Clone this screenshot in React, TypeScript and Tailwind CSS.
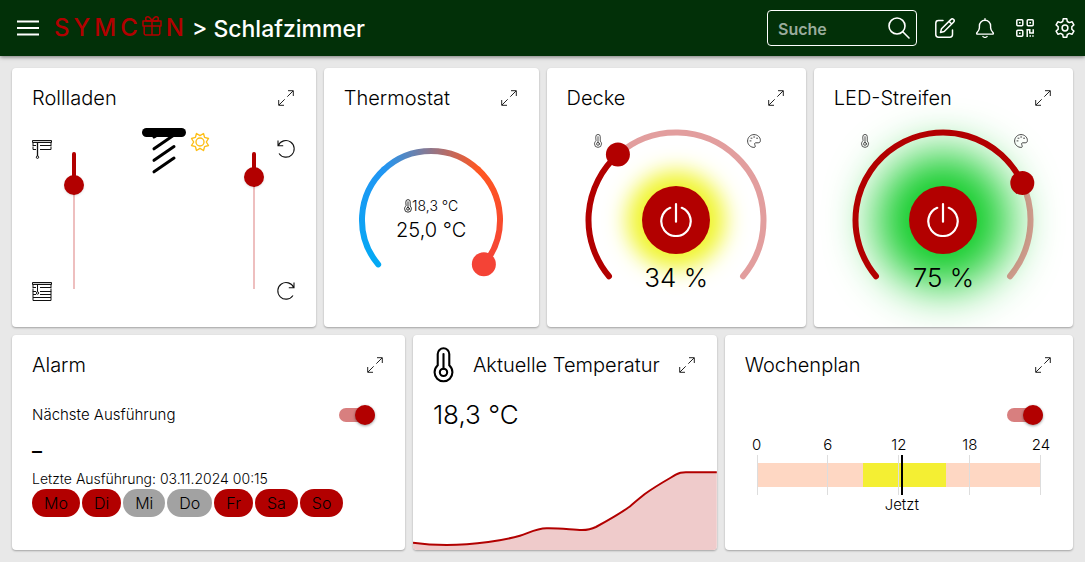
import { useId, useState, type ReactNode } from 'react';

interface CardProps {
    title: string;
    className: string;
    icon?: ReactNode;
    children: ReactNode;
}

interface Point {
    x: number;
    y: number;
}

const DAYS = ['Mo', 'Di', 'Mi', 'Do', 'Fr', 'Sa', 'So'];
const HOURS = [0, 6, 12, 18, 24];
const NOW = 12.25;

// Dials start at -130° and end at 130°, measured from the top
const DIAL_RANGE = 130;

const polar = (radius: number, angle: number): Point => {
    const rad = (angle * Math.PI) / 180;
    return { x: radius * Math.sin(rad), y: -radius * Math.cos(rad) };
};

const arc = (radius: number, from: number, to: number) => {
    const a = polar(radius, from);
    const b = polar(radius, to);
    return `M${a.x} ${a.y}A${radius} ${radius} 0 ${to - from > 180 ? 1 : 0} 1 ${b.x} ${b.y}`;
};

function ExpandIcon() {
    return (
        <svg viewBox="0 0 16 16" className="size-4" fill="none" stroke="#222" strokeWidth="1">
            <path d="M10 .7h5.3V6M15.1.9 9.3 6.7M.7 10v5.3H6M.9 15.1l5.8-5.8" />
        </svg>
    );
}

function ThermometerIcon({ className, strokeWidth = 1 }: { className: string; strokeWidth?: number }) {
    return (
        <svg viewBox="0 0 20 34" className={className} fill="none" stroke="currentColor" strokeWidth={strokeWidth} strokeLinecap="round">
            <path d="M4.5 6.5a5.5 5.5 0 0 1 11 0v10.7c1.9 1.8 3 4 3 6.8a8.5 8.5 0 0 1-17 0c0-2.8 1.1-5 3-6.8z" />
            <circle cx="10" cy="24" r="3.5" />
            <path d="M10 6.5v14" />
        </svg>
    );
}

function PaletteIcon() {
    return (
        <svg viewBox="0 0 14 14" className="size-3.5" fill="none" stroke="#333" strokeWidth="0.9">
            <path d="M7.5 13.4C3.8 13.6.6 10.8.6 7 .6 3.5 3.4.6 7 .6s6.4 2.6 6.4 5.9c0 1.5-.8 2.3-2.2 2.3H8.8c-1 0-1.5.8-1.1 1.7l.4 1.2c.3.9.1 1.6-.6 1.7z" />
            <path d="M3 6.9h1M4 4.2h1M6.7 3h1M9.6 4.2h1" strokeLinecap="round" />
        </svg>
    );
}

function BlindIcon({ closed }: { closed?: boolean }) {
    return (
        <svg viewBox="0 0 20 20" className="size-5" fill="none" stroke="#111" strokeWidth="1">
            <path d="M.5 1.5h19v2H.5z" fill="#ccc" />
            <path d="M1 3.500v3.500M19 3.500v3.500M1 6.500h3M8 6.500h11M1 10.500h3M8 10.500h11M19 7.500v3M1 7.500v3" />
            {closed ? (
                <>
                    <path d="M5.500 4v7M1 10v9.500M19 10v9.500M1 13.500h3M8 13.500h11M1 16.500h18M1 19.500h18" />
                    <circle cx="5.500" cy="12" r="1.200" fill="#fff" />
                </>
            ) : (
                <>
                    <path d="M5.500 4v13" strokeWidth="1.3" />
                    <circle cx="5.500" cy="18.200" r="1.200" />
                </>
            )}
        </svg>
    );
}

function RotateIcon({ clockwise }: { clockwise?: boolean }) {
    return (
        <svg
            viewBox="0 0 20 20"
            className={clockwise ? 'size-5 -scale-x-100' : 'size-5'}
            fill="none"
            stroke="#111"
            strokeWidth="1.1"
        >
            <path d="M2 1.500v5.200h5.200M2.300 6.500a8.300 8.300 0 1 1 .7 8" />
        </svg>
    );
}

function Card({ title, className, icon, children }: CardProps) {
    return (
        <section className={`flex flex-col overflow-hidden rounded bg-white pt-4 shadow-[0_1px_2px_rgba(0,0,0,0.3)] ${className}`}>
            <div className="flex h-7 items-center px-5">
                {icon && <span className="flex w-10 shrink-0">{icon}</span>}
                <h2 className="flex-1 text-[20px] font-light whitespace-nowrap">{title}</h2>
                <button aria-label={`${title} vergrößern`} className="flex size-5 items-center justify-center">
                    <ExpandIcon />
                </button>
            </div>
            {children}
        </section>
    );
}

function VerticalSlider({ label, initial }: { label: string; initial: number }) {
    const [value, setValue] = useState(initial);

    return (
        <div className="relative flex h-[137px] w-5 justify-center">
            <div className="h-full w-0.5 bg-[#eebfbf]"></div>
            <div className="absolute top-0 w-1 rounded-t-sm bg-[#b20000]" style={{ height: `${value}%` }}></div>
            <div
                className="absolute size-5 -translate-y-1/2 rounded-full bg-[#b20000] shadow-sm"
                style={{ top: `${value}%` }}
            ></div>
            <input
                type="range"
                aria-label={label}
                value={value}
                onChange={(e) => setValue(Number(e.target.value))}
                className="absolute inset-0 h-full w-full cursor-pointer opacity-0 [writing-mode:vertical-lr]"
            />
        </div>
    );
}

function Switch({ label }: { label: string }) {
    const [on, setOn] = useState(true);

    return (
        <label className="relative flex h-5 w-9 cursor-pointer items-center">
            <input
                type="checkbox"
                role="switch"
                aria-label={label}
                checked={on}
                onChange={() => setOn(!on)}
                className="peer h-3.5 w-full appearance-none rounded-full bg-gray-400 checked:bg-[#d87f7f]"
            />
            <span className="pointer-events-none absolute left-0 size-5 rounded-full bg-gray-100 shadow-[0_1px_3px_rgba(0,0,0,0.4)] peer-checked:left-4 peer-checked:bg-[#b20000]"></span>
        </label>
    );
}

function LightDial({ name, initial, glow }: { name: string; initial: number; glow: string }) {
    const [value, setValue] = useState(initial);
    const angle = -DIAL_RANGE + (value / 100) * DIAL_RANGE * 2;
    const thumb = polar(87.5, angle);

    return (
        <div className="mx-auto mt-3.5 grid size-[188px] place-items-center *:col-start-1 *:row-start-1">
            <button aria-label={`${name} schalten`} className={`flex size-[68px] items-center justify-center rounded-full bg-[#b20000] ${glow}`}>
                <svg viewBox="0 0 34 34" className="size-[34px]" fill="none" stroke="#fff" strokeWidth="2.2" strokeLinecap="round">
                    <path d="M17 1.200v17.500M11.200 4.800a14.700 14.700 0 1 0 11.600 0" />
                </svg>
            </button>
            <svg viewBox="-94 -94 188 188" className="pointer-events-none z-10 size-full" fill="none" strokeWidth="6" strokeLinecap="round">
                <path d={arc(87.5, angle, DIAL_RANGE)} stroke="#b20000" strokeOpacity="0.38" />
                <path d={arc(87.5, -DIAL_RANGE, angle)} stroke="#b20000" />
                <circle cx={thumb.x} cy={thumb.y} r="12" fill="#b20000" />
            </svg>
            <div className="z-10 flex w-full items-center justify-between self-start px-2 pt-2">
                <button aria-label="Farbtemperatur" className="flex w-4 justify-center">
                    <ThermometerIcon className="h-3.5 w-2.5 text-[#333]" strokeWidth={2} />
                </button>
                <button aria-label="Farbe" className="flex w-4 justify-center">
                    <PaletteIcon />
                </button>
            </div>
            <output className="z-10 mb-[18px] self-end text-[26px] leading-9 font-light">{value} %</output>
            <input
                type="range"
                aria-label={`${name} Helligkeit`}
                value={value}
                onChange={(e) => setValue(Number(e.target.value))}
                className="sr-only"
            />
        </div>
    );
}

function ThermostatDial() {
    const id = useId();
    const end = polar(69, DIAL_RANGE);

    return (
        <div className="mx-auto mt-8 grid size-[152px] place-items-center *:col-start-1 *:row-start-1">
            <svg viewBox="-76 -76 152 152" className="size-full overflow-visible" fill="none" strokeWidth="6">
                <defs>
                    <linearGradient id={`${id}l`} gradientUnits="userSpaceOnUse" x1="-53" y1="44" x2="-47" y2="-50">
                        <stop stopColor="#03a9f4" />
                        <stop offset="1" stopColor="#2196f3" />
                    </linearGradient>
                    <linearGradient id={`${id}t`} gradientUnits="userSpaceOnUse" x1="-47" y1="0" x2="47" y2="0">
                        <stop stopColor="#2196f3" />
                        <stop offset="1" stopColor="#ff5722" />
                    </linearGradient>
                    <linearGradient id={`${id}r`} gradientUnits="userSpaceOnUse" x1="47" y1="-50" x2="53" y2="44">
                        <stop stopColor="#ff5722" />
                        <stop offset="1" stopColor="#f44336" />
                    </linearGradient>
                </defs>
                <path d={arc(69, -DIAL_RANGE, -43)} stroke={`url(#${id}l)`} strokeLinecap="round" />
                <path d={arc(69, 43, DIAL_RANGE)} stroke={`url(#${id}r)`} strokeLinecap="round" />
                <path d={arc(69, -44, 44)} stroke={`url(#${id}t)`} />
                <circle cx={end.x} cy={end.y} r="12" fill="#f44336" />
            </svg>
            <div className="flex flex-col items-center pb-1 font-light">
                <span className="flex h-6 items-center text-sm">
                    <ThermometerIcon className="h-3.5 w-2" strokeWidth={2} />
                    18,3 °C
                </span>
                <span className="text-[20px] leading-6">25,0 °C</span>
            </div>
        </div>
    );
}

function Shutter() {
    return (
        <div className="flex justify-between px-5 pt-4">
            <div className="flex gap-3">
                <div className="mt-[11px] flex h-[162px] flex-col justify-between">
                    <button aria-label="Öffnen">
                        <BlindIcon />
                    </button>
                    <button aria-label="Schließen">
                        <BlindIcon closed />
                    </button>
                </div>
                <div className="pt-6">
                    <VerticalSlider label="Position" initial={24} />
                </div>
            </div>
            <div className="flex gap-1 pl-6">
                <svg viewBox="0 0 44 46" className="h-[46px] w-11" stroke="#000" strokeLinecap="round">
                    <path d="M4.500 4.500h35" strokeWidth="9" />
                    <path d="M12 9l1.500-.8M12 20.800 32 7M12 32.300l20-13.800M12 43.800 32 30" strokeWidth="3" />
                </svg>
                <svg viewBox="-10 -10 20 20" className="mt-1 size-5" fill="none" stroke="#fdbf18" strokeWidth="1.4" strokeLinejoin="round">
                    <path d="M0-6.300 3.500-8.500 4.600-4.600 8.500-3.500 6.300 0 8.500 3.500 4.600 4.600 3.500 8.500 0 6.300-3.500 8.500-4.600 4.600-8.500 3.500-6.300 0-8.500-3.500-4.600-4.600-3.500-8.500z" />
                    <circle r="4" />
                </svg>
            </div>
            <div className="flex gap-3">
                <div className="pt-6">
                    <VerticalSlider label="Lamellen" initial={18} />
                </div>
                <div className="mt-[11px] flex h-[162px] flex-col justify-between">
                    <button aria-label="Lamellen auf">
                        <RotateIcon />
                    </button>
                    <button aria-label="Lamellen zu">
                        <RotateIcon clockwise />
                    </button>
                </div>
            </div>
        </div>
    );
}

function Alarm() {
    const [active, setActive] = useState(['Mo', 'Di', 'Fr', 'Sa', 'So']);

    const toggle = (day: string) => {
        setActive(active.includes(day) ? active.filter((d) => d !== day) : [...active, day]);
    };

    return (
        <div className="flex flex-col px-5 pt-6 text-[15px] font-light">
            <div className="flex h-6 items-center justify-between pr-2.5">
                <span>Nächste Ausführung</span>
                <Switch label="Alarm aktiv" />
            </div>
            <div className="pt-2 text-[20px] leading-8 font-medium">–</div>
            <div className="text-sm leading-6">Letzte Ausführung: 03.11.2024 00:15</div>
            <div className="-mt-0.5 flex gap-0.5 text-base">
                {DAYS.map((day) => (
                    <button
                        key={day}
                        aria-pressed={active.includes(day)}
                        onClick={() => toggle(day)}
                        className={`h-7 rounded-full px-3 leading-7 ${active.includes(day) ? 'bg-[#b20000]' : 'bg-[#a2a2a2]'}`}
                    >
                        {day}
                    </button>
                ))}
            </div>
        </div>
    );
}

function Temperature() {
    const line =
        'M0 72.7C11 74.3 22 75 33.7 75 62 75 92 70 107 65.7 116 63 123 58.5 133.7 58.3 148 58 160 60 169 60 176 60 178 59.5 183 57 195 50.5 208 43 217 36.5 222 32 227 28 232 24 243 16 254 10 263 4.7 267 2.4 268 2.3 273 2.3H304';

    return (
        <>
            <div className="px-5 pt-4 text-[26px] leading-10 font-light">18,3 °C</div>
            <svg viewBox="0 0 304 80" preserveAspectRatio="none" className="mt-auto h-20 w-full" fill="none">
                <path d={`${line}V80H0z`} fill="#efcbcb" />
                <path d={line} stroke="#b20000" strokeWidth="2" />
            </svg>
        </>
    );
}

function WeekPlan() {
    return (
        <div className="px-5 pt-6 text-[15px] font-light">
            <div className="flex h-6 items-center justify-end pr-2.5">
                <Switch label="Wochenplan aktiv" />
            </div>
            <div className="mx-3 pt-2">
                <div className="flex justify-between leading-5">
                    {HOURS.map((hour) => (
                        <span key={hour} className="flex w-0 justify-center">
                            {hour}
                        </span>
                    ))}
                </div>
                <div className="relative flex h-10 items-center">
                    <div className="grid h-6 w-full grid-cols-24">
                        <div className="col-span-9 bg-[#fed7c3]"></div>
                        <div className="col-span-7 bg-[#f4ef33]"></div>
                        <div className="col-span-8 bg-[#fed7c3]"></div>
                    </div>
                    <div className="absolute inset-0 flex justify-between">
                        {HOURS.map((hour) => (
                            <div key={hour} className="w-px bg-[#dddddd]"></div>
                        ))}
                    </div>
                    <div
                        className="absolute inset-y-0 w-0.5 -translate-x-1/2 bg-black"
                        style={{ left: `${(NOW / 24) * 100}%` }}
                    ></div>
                </div>
                <div className="flex leading-5">
                    <span style={{ width: `${(NOW / 24) * 100}%` }}></span>
                    <span className="flex w-0 justify-center">Jetzt</span>
                </div>
            </div>
        </div>
    );
}

function Header() {
    return (
        <header className="relative flex h-14 items-center bg-[#023008] pr-2 pl-4 text-white shadow-[0_1px_4px_rgba(0,0,0,0.5)]">
            <button aria-label="Menü" className="flex">
                <svg viewBox="0 0 24 24" className="size-6" stroke="currentColor" strokeWidth="2">
                    <path d="M1 5.500h22M1 12h22M1 18.500h22" />
                </svg>
            </button>
            <div className="ml-3.5 flex items-center gap-1 text-[24px] leading-8 font-medium text-[#b20000]">
                <span>S</span>
                <span>Y</span>
                <span>M</span>
                <span>C</span>
                <svg viewBox="0 0 20 20" className="mb-1 size-5" fill="none" stroke="currentColor" strokeWidth="1.5" strokeLinejoin="round">
                    <path d="M1 5h18v5H1zM2.200 10v7.500c0 .9.500 1.400 1.400 1.400h12.800c.9 0 1.400-.5 1.400-1.400V10M10 5v14" />
                    <path d="M10 5C8.500 2 7.500.8 5.800.8a2.100 2.100 0 0 0 0 4.200zM10 5c1.500-3 2.500-4.200 4.200-4.200a2.100 2.100 0 0 1 0 4.200z" />
                </svg>
                <span>N</span>
            </div>
            <h1 className="mt-0.5 ml-2 text-[23px] font-medium whitespace-nowrap">&gt; Schlafzimmer</h1>
            <label className="ml-auto flex h-9 w-[150px] items-center rounded border border-white pr-1.5 pl-2.5">
                <input
                    type="search"
                    placeholder="Suche"
                    aria-label="Suche"
                    className="min-w-0 flex-1 bg-transparent pt-0.5 text-base font-semibold outline-none placeholder:text-[#9aac9c]"
                />
                <svg viewBox="0 0 22 22" className="size-[22px] shrink-0" fill="none" stroke="currentColor" strokeWidth="1.6" strokeLinecap="round">
                    <circle cx="9" cy="9" r="8" />
                    <path d="m14.800 14.800 6.200 6.200" />
                </svg>
            </label>
            <nav className="ml-4 flex gap-4 *:flex *:size-6 *:items-center *:justify-center">
                <button aria-label="Bearbeiten">
                    <svg viewBox="0 0 20 20" className="size-5" fill="none" stroke="currentColor" strokeWidth="1.5" strokeLinecap="round" strokeLinejoin="round">
                        <path d="M8 2.500H3.500c-1.700 0-2.700 1-2.700 2.700v11.300c0 1.700 1 2.700 2.700 2.700h11.300c1.700 0 2.700-1 2.700-2.700V12" />
                        <path d="M6.500 10.800 16 1.400a1.700 1.700 0 0 1 2.500 0l.2.200a1.700 1.700 0 0 1 0 2.400l-9.500 9.500-3.700.9zM14 3.400 16.700 6" />
                    </svg>
                </button>
                <button aria-label="Meldungen">
                    <svg viewBox="0 0 20 20" className="size-5" fill="none" stroke="currentColor" strokeWidth="1.4" strokeLinecap="round" strokeLinejoin="round">
                        <path d="M10 2.300c-3.400 0-5.600 2.500-5.600 5.700v1.700c0 2-1 3.500-2.500 5.100-.5.600-.2 1.300.5 1.300h15.200c.7 0 1-.7.5-1.300-1.500-1.600-2.500-3.100-2.500-5.100V8c0-3.200-2.200-5.700-5.600-5.700zM10 .7v1.600M8 18.600c.9 1 3.100 1 4 0" />
                    </svg>
                </button>
                <button aria-label="QR-Code">
                    <svg viewBox="0 0 18 18" className="size-[18px]" fill="none" stroke="currentColor" strokeWidth="1.5">
                        <rect x=".8" y=".8" width="6" height="6" rx="1" />
                        <rect x="11.2" y=".8" width="6" height="6" rx="1" />
                        <rect x=".8" y="11.2" width="6" height="6" rx="1" />
                        <path d="M3 3.800h1.600M13.400 3.800H15M3 14.200h1.600M11.200 18v-7.200h2.600v3.200h3.400v-3.700M13.500 17h1.500M16.200 17h1.500" />
                    </svg>
                </button>
                <button aria-label="Einstellungen">
                    <svg viewBox="0 0 20 20" className="size-5" fill="none" stroke="currentColor" strokeWidth="1.5" strokeLinejoin="round">
                        <path d="M8.200.8h3.600l.5 2.700c.8.300 1.400.7 2 1.100l2.700-.9 1.900 3.200-2.100 1.800c.1.900.1 1.700 0 2.600l2.100 1.800-1.900 3.200-2.700-.9c-.6.400-1.200.8-2 1.100l-.5 2.700H8.200l-.5-2.700c-.8-.3-1.400-.7-2-1.100l-2.700.9-1.900-3.200 2.100-1.800c-.1-.9-.1-1.700 0-2.600L1.100 6.900 3 3.700l2.700.9c.6-.4 1.200-.8 2-1.100z" />
                        <circle cx="10" cy="10" r="2.9" />
                    </svg>
                </button>
            </nav>
        </header>
    );
}

export default function App() {
    return (
        <div className="min-h-screen bg-[#e8e8e8] font-['Inter','Liberation_Sans',sans-serif] text-black">
            <Header />
            <main className="grid grid-cols-24 grid-rows-[minmax(259px,auto)_minmax(215px,auto)] gap-2 p-3">
                <Card title="Rollladen" className="col-span-7">
                    <Shutter />
                </Card>
                <Card title="Thermostat" className="col-span-5">
                    <ThermostatDial />
                </Card>
                <Card title="Decke" className="col-span-6">
                    <LightDial name="Decke" initial={34} glow="shadow-[0_0_22px_15px_#f0f52d]" />
                </Card>
                <Card title="LED-Streifen" className="col-span-6">
                    <LightDial name="LED-Streifen" initial={75} glow="shadow-[0_0_48px_34px_#10cc28]" />
                </Card>
                <Card title="Alarm" className="col-span-9">
                    <Alarm />
                </Card>
                <Card title="Aktuelle Temperatur" className="col-span-7" icon={<ThermometerIcon className="h-9 w-[21px]" strokeWidth={2} />}>
                    <Temperature />
                </Card>
                <Card title="Wochenplan" className="col-span-8">
                    <WeekPlan />
                </Card>
            </main>
        </div>
    );
}
